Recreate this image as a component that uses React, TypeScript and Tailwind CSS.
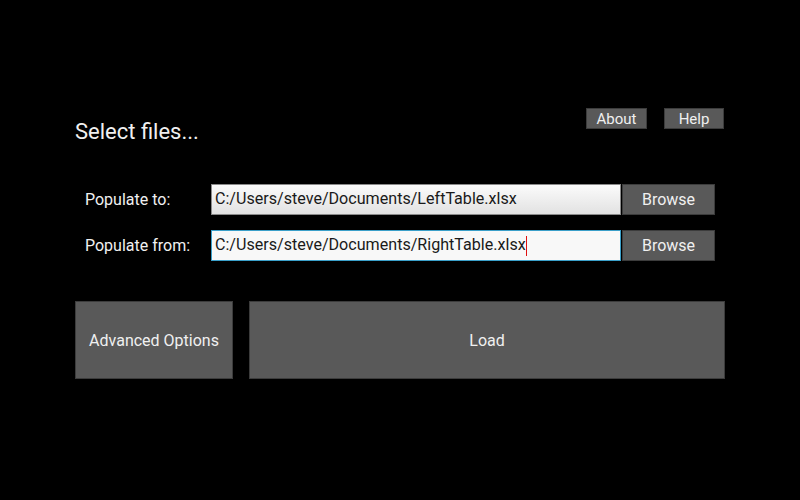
import React from "react";

export default function App() {
  return (
    <div
      className="w-[800px] h-[500px] bg-black text-[#ececec] relative overflow-hidden"
      style={{ fontFamily: "Roboto, 'Liberation Sans', sans-serif" }}
    >
      <div className="pl-[75px] pr-[75px] pt-[108px] flex flex-col">
        {/* header */}
        <div className="flex items-start">
          <div className="mt-[11px] text-[22px] leading-[26px] text-[#f0f0f0]">Select files...</div>
          <div className="ml-auto flex gap-[17px] mr-[1px]">
            <button className="w-[61px] h-[21px] pt-[1px] bg-[#595959] border border-[#3c3c3c] text-[15px] leading-[19px] text-[#f0f0f0]">
              About
            </button>
            <button className="w-[60px] h-[21px] pt-[1px] bg-[#595959] border border-[#3c3c3c] text-[15px] leading-[19px] text-[#f0f0f0]">
              Help
            </button>
          </div>
        </div>

        {/* rows */}
        <div className="mt-[39px] flex flex-col gap-[15px]">
          <div className="flex items-center h-[31px]">
            <div className="w-[136px] pl-[10px] text-[16px] text-[#f0f0f0]">Populate to:</div>
            <div className="w-[410px] h-[31px] border border-[#8a8a8a] bg-gradient-to-b from-[#fbfbfb] to-[#e2e2e2] flex items-center pl-[3px] text-[16.1px] text-[#1a1a1a]">
              C:/Users/steve/Documents/LeftTable.xlsx
            </div>
            <button className="ml-[1px] w-[93px] h-[31px] pt-[1px] bg-[#595959] border border-[#3c3c3c] text-[16px] text-[#f0f0f0]">
              Browse
            </button>
          </div>
          <div className="flex items-center h-[31px]">
            <div className="w-[136px] pl-[10px] text-[16px] text-[#f0f0f0]">Populate from:</div>
            <div className="w-[410px] h-[31px] border border-[#3a9fc9] bg-[#f8f8f8] flex items-center pl-[3px] text-[16.1px] text-[#1a1a1a]">
              C:/Users/steve/Documents/RightTable.xlsx
              <span className="inline-block w-[1px] h-[20px] bg-[#e01010]" />
            </div>
            <button className="ml-[1px] w-[93px] h-[31px] pt-[1px] bg-[#595959] border border-[#3c3c3c] text-[16px] text-[#f0f0f0]">
              Browse
            </button>
          </div>
        </div>

        {/* big buttons */}
        <div className="mt-[40px] flex gap-[16px]">
          <button className="w-[158px] h-[78px] pt-[2px] bg-[#595959] border border-[#3c3c3c] text-[16px] text-[#f0f0f0]">
            Advanced Options
          </button>
          <button className="w-[476px] h-[78px] pt-[2px] bg-[#595959] border border-[#3c3c3c] text-[16px] text-[#f0f0f0]">
            Load
          </button>
        </div>
      </div>
    </div>
  );
}
